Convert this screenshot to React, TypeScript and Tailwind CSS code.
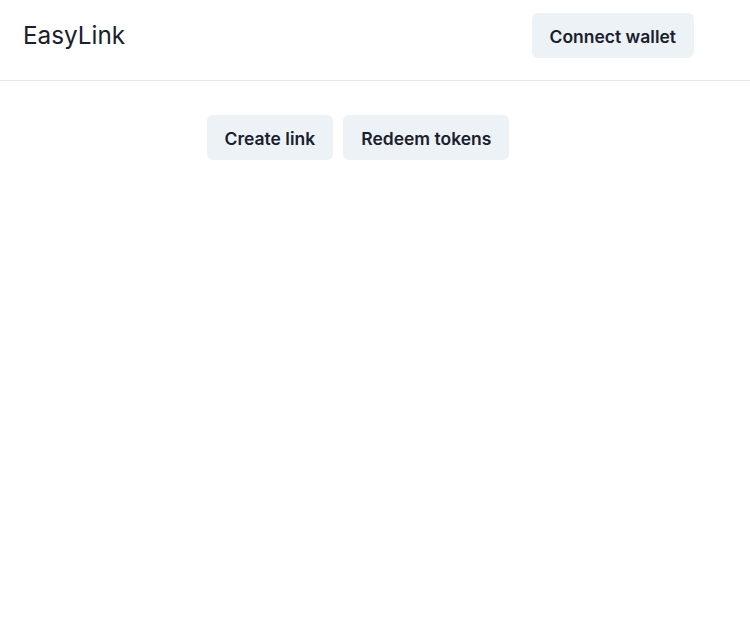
export default function App() {
  return (
    <div
      className="min-h-screen bg-white text-[#1a202c]"
      style={{ fontFamily: "Inter, 'Noto Sans', sans-serif" }}
    >
      {/* Header */}
      <header className="flex items-start justify-between border-b border-[#e2e8f0] pl-[23px] pr-[56px] pt-[13px] pb-[22px]">
        <h1 className="mt-[7px] text-[24.3px] leading-[30px] font-normal">EasyLink</h1>
        <button className="h-[45px] rounded-md bg-[#edf2f7] px-[18px] pt-[3px] text-[17.5px] font-semibold">
          Connect wallet
        </button>
      </header>

      {/* Main */}
      <main className="flex justify-center gap-[10px] pt-[34px] pr-[34px]">
        <button className="h-[45px] rounded-md bg-[#edf2f7] px-[18px] pt-[3px] text-[17.5px] font-semibold">
          Create link
        </button>
        <button className="h-[45px] rounded-md bg-[#edf2f7] px-[18px] pt-[3px] text-[17.5px] font-semibold">
          Redeem tokens
        </button>
      </main>
    </div>
  );
}
